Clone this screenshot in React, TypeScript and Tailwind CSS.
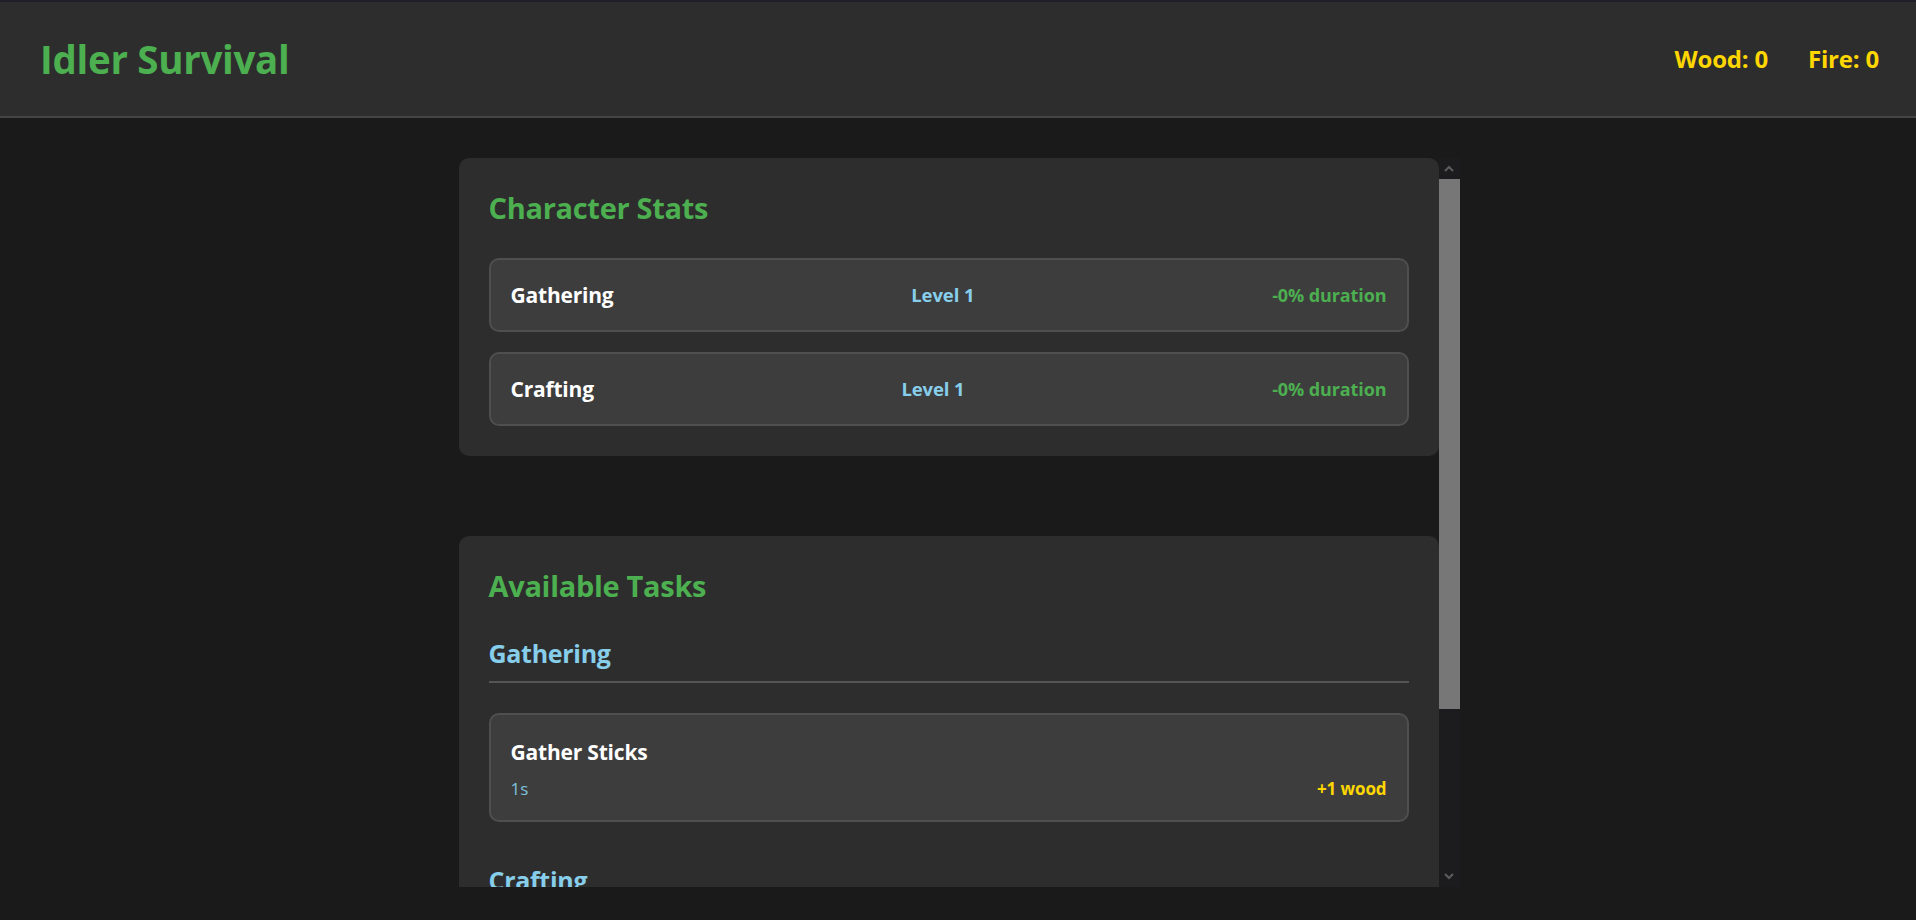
const stats = [
    { name: "Gathering", level: 1, bonus: 0 },
    { name: "Crafting", level: 1, bonus: 0 },
];

const taskGroups = [
    {
        title: "Gathering",
        tasks: [{ name: "Gather Sticks", time: "1s", reward: "+1 wood" }],
    },
    {
        title: "Crafting",
        tasks: [{ name: "Make Fire", time: "3s", reward: "+1 fire" }],
    },
];

function Chevron({ up }: { up?: boolean }) {
    return (
        <svg width="10" height="7" viewBox="0 0 10 7" className="block">
            <polyline
                points={up ? "1,6 5,2 9,6" : "1,1 5,5 9,1"}
                fill="none"
                stroke="#5c5c5f"
                strokeWidth="2"
            />
        </svg>
    );
}

function Scrollbar() {
    return (
        <div className="w-[21px] shrink-0 flex flex-col bg-[#1c1c1f]">
            <div className="h-[21px] flex items-center justify-center">
                <Chevron up />
            </div>
            <div className="h-[530px] bg-[#777777]" />
            <div className="flex-1" />
            <div className="h-[21px] flex items-center justify-center">
                <Chevron />
            </div>
        </div>
    );
}

export default function App() {
    return (
        <div className="min-h-screen bg-[#1a1a1a] font-['Open_Sans','Noto_Sans',sans-serif] text-white">
            <header className="h-[118px] bg-[#2d2d2d] border-t-[2px] border-t-[#1f1e29] border-b-[2px] border-b-[#444444] flex items-center justify-between pl-10 pr-[37px]">
                <h1 className="text-[38.5px] leading-[52px] font-bold text-[#4caf50] tracking-[-0.3px]">Idler Survival</h1>
                <div className="flex gap-10 text-[24px] font-bold text-[#ffd700] tracking-[-0.2px]">
                    <span>Wood: 0</span>
                    <span>Fire: 0</span>
                </div>
            </header>

            <main className="pt-10">
                <div className="w-[1003px] mx-auto pl-[2px] h-[729px] flex">
                    <div className="flex-1 overflow-hidden">
                        <section className="bg-[#2d2d2d] rounded-[10px] p-[30px]">
                            <h2 className="text-[29px] leading-[40px] font-bold text-[#4caf50] mb-[30px] tracking-[-0.3px]">Character Stats</h2>
                            <div className="flex flex-col gap-5">
                                {stats.map((s) => (
                                    <div
                                        key={s.name}
                                        className="flex justify-between items-center bg-[#3d3d3d] border-2 border-[#4f4f4f] rounded-[10px] px-5 py-5 leading-[30px]"
                                    >
                                        <span className="text-[21px] font-bold tracking-[-0.2px]">{s.name}</span>
                                        <span className="text-[18.5px] font-bold text-[#87ceeb] tracking-[-0.1px]">Level {s.level}</span>
                                        <span className="text-[18px] font-bold text-[#4caf50] tracking-[-0.1px]">-{s.bonus}% duration</span>
                                    </div>
                                ))}
                            </div>
                        </section>

                        <section className="mt-20 bg-[#2d2d2d] rounded-[10px] p-[30px]">
                            <h2 className="text-[29px] leading-[40px] font-bold text-[#4caf50] mb-[30px] tracking-[-0.3px]">Available Tasks</h2>
                            {taskGroups.map((g) => (
                                <div key={g.title} className="mb-[41px]">
                                    <h3 className="text-[25px] leading-[35px] font-bold text-[#87ceeb] pb-[10px] border-b-2 border-[#555555] mb-[30px] tracking-[-0.3px]">
                                        {g.title}
                                    </h3>
                                    {g.tasks.map((t) => (
                                        <div
                                            key={t.name}
                                            className="bg-[#3d3d3d] border-2 border-[#4f4f4f] rounded-[10px] px-5 pt-[22px] pb-5"
                                        >
                                            <div className="text-[21px] leading-[30px] font-bold tracking-[-0.2px]">{t.name}</div>
                                            <div className="mt-[10px] flex justify-between items-center leading-[23px]">
                                                <span className="text-[17px] text-[#7fc0de]">{t.time}</span>
                                                <span className="text-[17px] font-bold text-[#ffd700] tracking-[-0.1px]">{t.reward}</span>
                                            </div>
                                        </div>
                                    ))}
                                </div>
                            ))}
                        </section>
                    </div>
                    <Scrollbar />
                </div>
            </main>
        </div>
    );
}
